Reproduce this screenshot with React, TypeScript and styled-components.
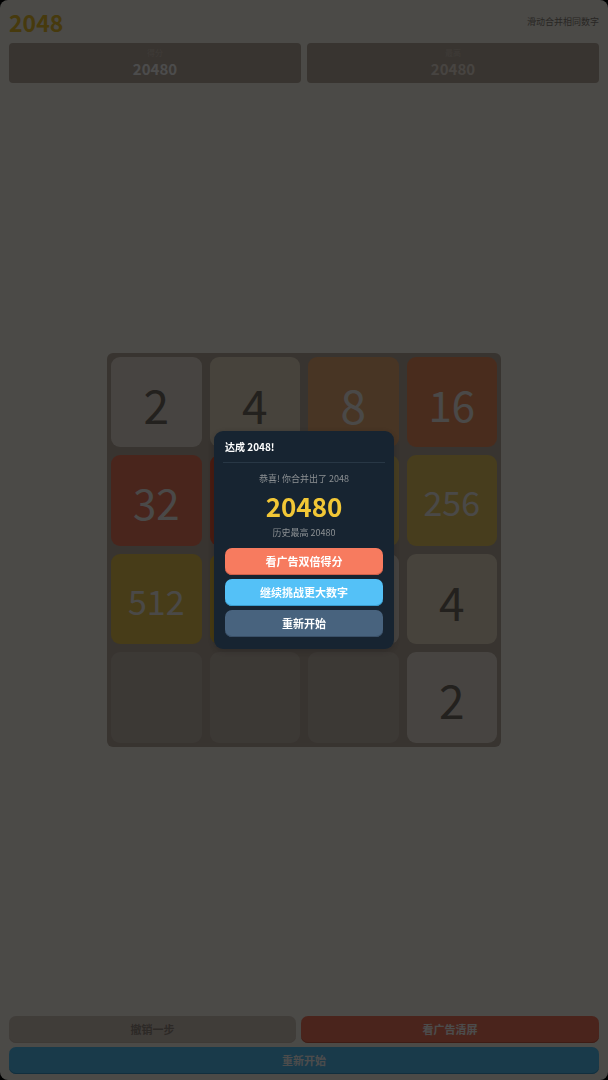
import React from "react";
import styled, { createGlobalStyle } from "styled-components";

const GlobalStyle = createGlobalStyle`
  *, *::before, *::after { box-sizing: border-box; }
  html, body { margin: 0; background: #000; }
  body, button { font-family: "Noto Sans CJK SC", sans-serif; }
  h1, h2, p { margin: 0; }
`;

const Game = styled.main`
  display: flex;
  flex-direction: column;
  min-height: 100vh;
  padding: 8px 9px 6px;
  background: #faf8ef;
  border-radius: 8px;
`;

const Header = styled.header`
  display: flex;
  align-items: center;
  justify-content: space-between;
  height: 28px;
  margin-bottom: 7px;
`;

const Title = styled.h1`
  font-size: 23px;
  line-height: 28px;
  font-weight: 700;
  color: #edc22e;
`;

const Hint = styled.span`
  font-size: 9px;
  line-height: 12px;
  color: #8a8279;
`;

const Scores = styled.section`
  display: flex;
  gap: 6px;
`;

const ScoreBox = styled.div`
  display: flex;
  flex: 1;
  flex-direction: column;
  align-items: center;
  height: 40px;
  padding-top: 4px;
  border-radius: 4px;
  background: #bbada0;
`;

const ScoreLabel = styled.span`
  font-size: 8px;
  line-height: 12px;
  color: #d2c6ba;
`;

const ScoreValue = styled.span<{ $dim?: boolean }>`
  font-size: 15px;
  line-height: 20px;
  font-weight: 700;
  color: ${(p) => (p.$dim ? "#eee4da" : "#fff")};
`;

const BoardArea = styled.section`
  display: flex;
  flex: 1;
  align-items: center;
  justify-content: center;
`;

const Board = styled.div`
  display: grid;
  grid-template-columns: repeat(4, 1fr);
  gap: 8px;
  width: 100%;
  max-width: 394px;
  padding: 4px;
  border-radius: 6px;
  background: #bbada0;
`;

const tileColors: Record<number, string> = {
  0: "#cabeb2",
  2: "#eee4da",
  4: "#ede0c8",
  8: "#f2b179",
  16: "#f59563",
  32: "#f67c5f",
  64: "#f65e3b",
  128: "#edcf72",
  256: "#edcc61",
  512: "#edc850",
  1024: "#edc53f",
  2048: "#edc22e",
};

const tileFont = (value: number) => {
  if (value < 10) return 46;
  if (value < 100) return 42;
  if (value < 1000) return 34;
  return 28;
};

const Tile = styled.div<{ $value: number }>`
  display: flex;
  align-items: center;
  justify-content: center;
  aspect-ratio: 1;
  min-width: 0;
  padding-top: 4px;
  border-radius: 9px;
  background: ${(p) => tileColors[p.$value]};
  color: ${(p) => (p.$value <= 4 ? "#776e65" : "#f9f6f2")};
  font-size: ${(p) => tileFont(p.$value)}px;
  line-height: 1;
`;

const Actions = styled.footer`
  display: flex;
  flex-wrap: wrap;
  gap: 4px 5px;
`;

const tones = {
  coral: { bg: "#f77b5f", edge: "#cf5f49", text: "#fff" },
  sky: { bg: "#54c1f7", edge: "#3a9ccd", text: "#fff" },
  slate: { bg: "#48637e", edge: "#3a5068", text: "#fff" },
  muted: { bg: "#d8cbc0", edge: "#d0c2b6", text: "#948a81" },
};

const Button = styled.button<{ $tone: keyof typeof tones; $full?: boolean }>`
  flex: 1 1 ${(p) => (p.$full ? "100%" : "auto")};
  height: 27px;
  padding: 0 10px 2px;
  border: 0;
  border-radius: 7px;
  background: ${(p) => tones[p.$tone].bg};
  box-shadow: inset 0 -1px 0 ${(p) => tones[p.$tone].edge};
  color: ${(p) => tones[p.$tone].text};
  font-size: 11px;
  line-height: 16px;
  font-weight: 700;
  cursor: pointer;

  &:disabled {
    cursor: default;
  }
`;

const Overlay = styled.div`
  position: fixed;
  inset: 0;
  display: flex;
  align-items: center;
  justify-content: center;
  background: rgba(0, 0, 0, 0.7);
`;

const Dialog = styled.section`
  display: flex;
  flex-direction: column;
  width: 180px;
  padding: 8px 9px 12px;
  border-radius: 9px;
  background: #172431;
  box-shadow: 0 2px 8px rgba(0, 0, 0, 0.2);
`;

const DialogTitle = styled.h2`
  padding: 0 2px 8px;
  border-bottom: 1px solid #283745;
  color: #fff;
  font-size: 10px;
  line-height: 15px;
  font-weight: 700;
`;

const DialogBody = styled.div`
  padding: 9px 2px 8px;
  text-align: center;
`;

const Note = styled.p`
  color: #8c9093;
  font-size: 9px;
  line-height: 14px;
`;

const FinalScore = styled.p`
  color: #f2c736;
  font-size: 26px;
  line-height: 40px;
  font-weight: 700;
`;

const DialogActions = styled.div`
  display: grid;
  gap: 4px;
  padding: 0 2px;
`;

const cells = [2, 4, 8, 16, 32, 64, 128, 256, 512, 1024, 2, 4, 0, 0, 0, 2];

export default function App() {
  return (
    <>
      <GlobalStyle />
      <Game>
        <Header>
          <Title>2048</Title>
          <Hint>滑动合并相同数字</Hint>
        </Header>
        <Scores>
          <ScoreBox>
            <ScoreLabel>得分</ScoreLabel>
            <ScoreValue>20480</ScoreValue>
          </ScoreBox>
          <ScoreBox>
            <ScoreLabel>最高</ScoreLabel>
            <ScoreValue $dim>20480</ScoreValue>
          </ScoreBox>
        </Scores>
        <BoardArea>
          <Board>
            {cells.map((value, i) => {
              const covered = i === 5 || i === 6 || i === 9 || i === 10;
              return (
                <Tile key={i} $value={value}>
                  {value > 0 && !covered ? value : null}
                </Tile>
              );
            })}
          </Board>
        </BoardArea>
        <Actions>
          <Button $tone="muted" disabled>撤销一步</Button>
          <Button $tone="coral">看广告清屏</Button>
          <Button $tone="sky" $full>重新开始</Button>
        </Actions>
      </Game>
      <Overlay>
        <Dialog role="dialog" aria-modal="true" aria-labelledby="win-title">
          <DialogTitle id="win-title">达成 2048!</DialogTitle>
          <DialogBody>
            <Note>恭喜! 你合并出了 2048</Note>
            <FinalScore>20480</FinalScore>
            <Note>历史最高 20480</Note>
          </DialogBody>
          <DialogActions>
            <Button $tone="coral">看广告双倍得分</Button>
            <Button $tone="sky">继续挑战更大数字</Button>
            <Button $tone="slate">重新开始</Button>
          </DialogActions>
        </Dialog>
      </Overlay>
    </>
  );
}
